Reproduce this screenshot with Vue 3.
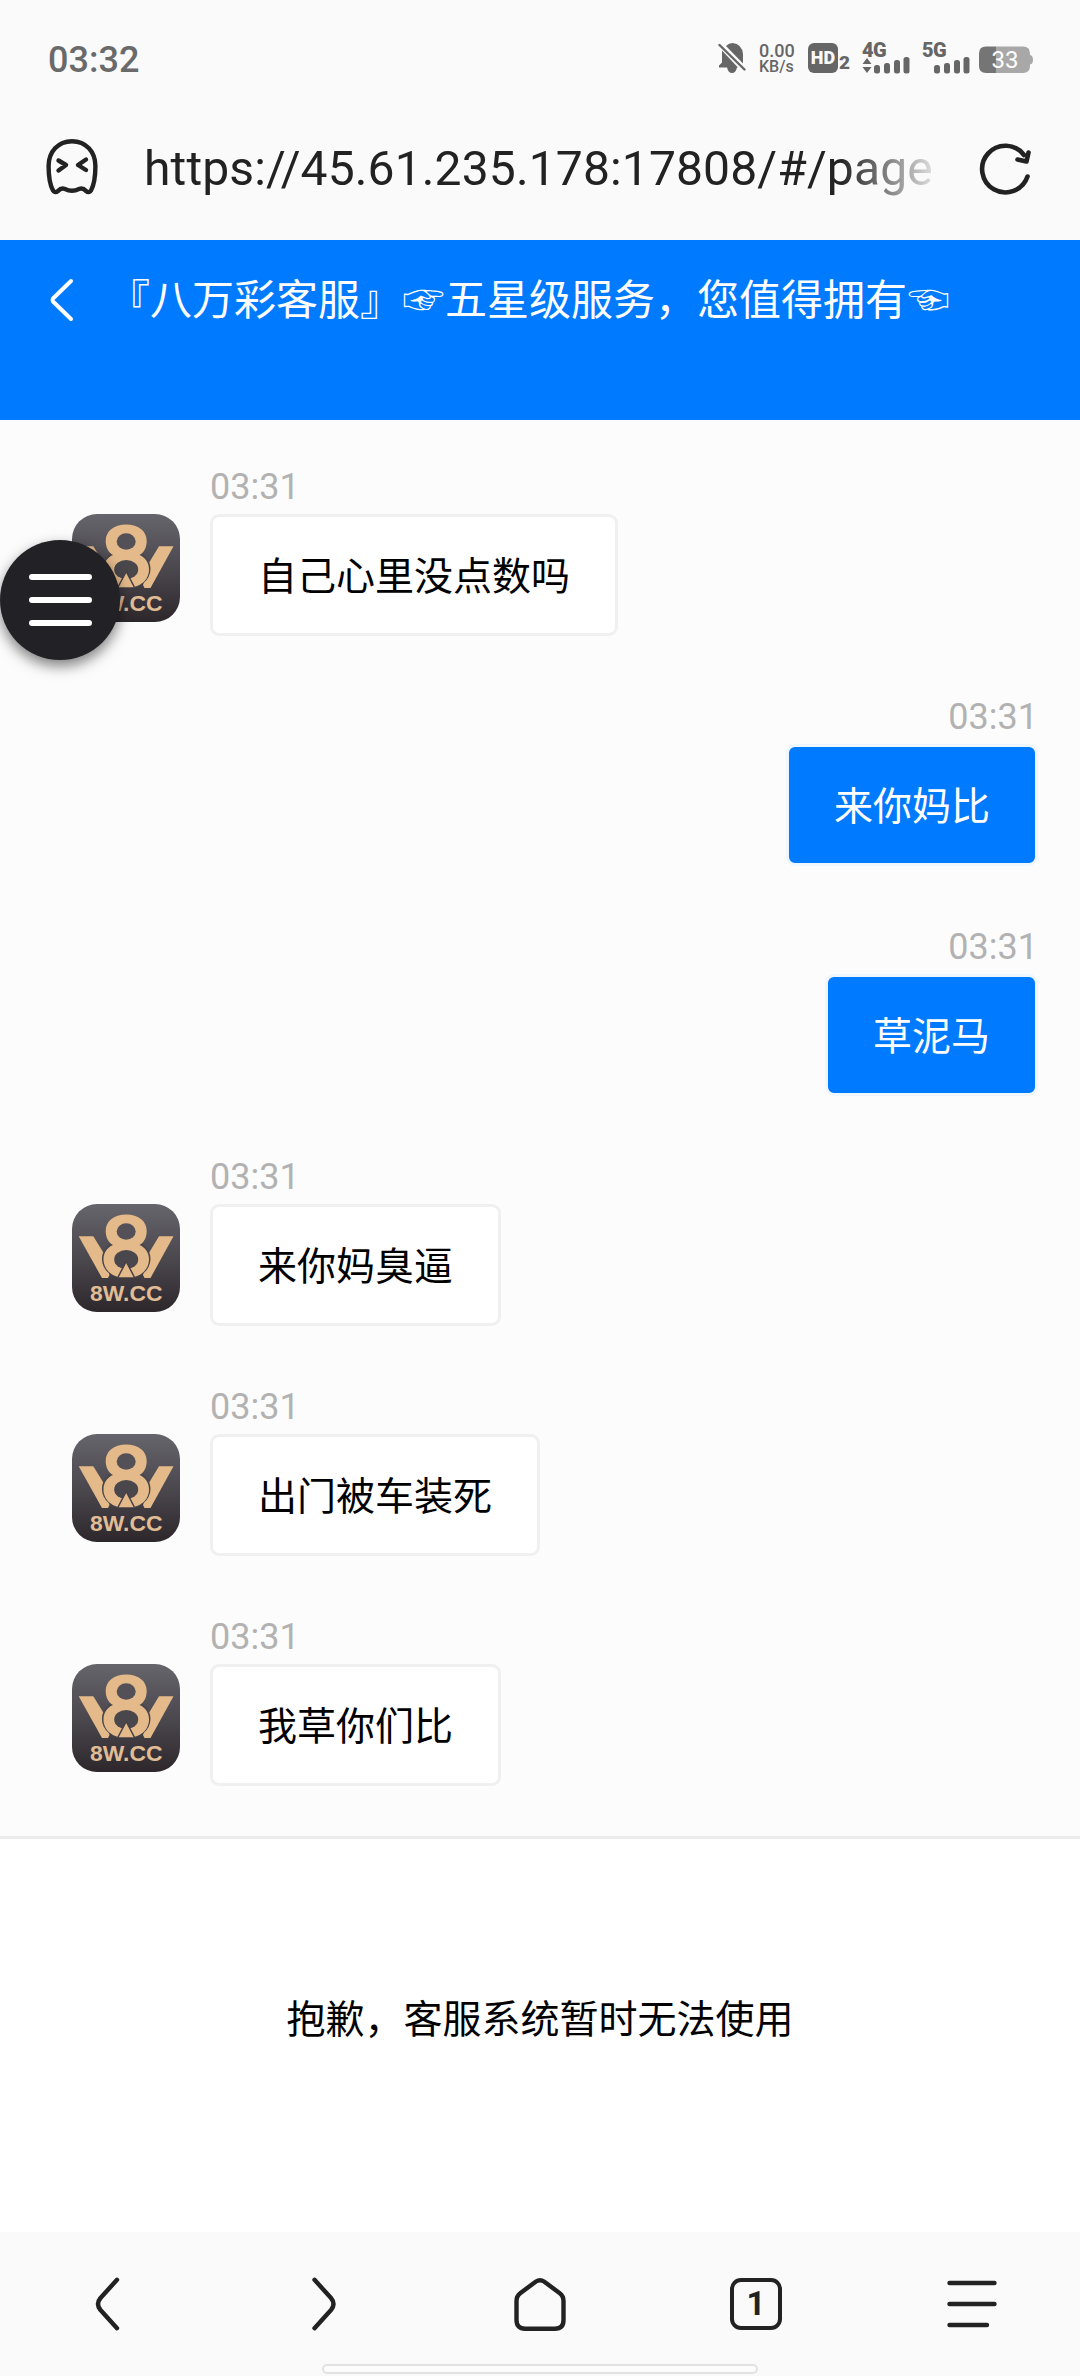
<script setup>
const messages = [
  { from: 'agent', time: '03:31', text: '自己心里没点数吗' },
  { from: 'me', time: '03:31', text: '来你妈比' },
  { from: 'me', time: '03:31', text: '草泥马' },
  { from: 'agent', time: '03:31', text: '来你妈臭逼' },
  { from: 'agent', time: '03:31', text: '出门被车装死' },
  { from: 'agent', time: '03:31', text: '我草你们比' },
]
</script>

<template>
  <div class="screen">
    <div class="status">
      <span class="clock">03:32</span>
      <div class="indicators">
        <svg class="bell" width="28" height="32" viewBox="0 0 28 32">
          <path d="M4 8.500 L20 25.500 H1 V23.500 L4 20.500Z M8 4 Q11 1 14.500 1 Q24 2 25 12 V21.500 Z" fill="#666" />
          <path d="M9 25 H19 Q18 31 14 31 Q10 31 9 25Z" fill="#666" />
          <path d="M1.500 3 L26.500 27.500" stroke="#666" stroke-width="2.400" stroke-linecap="round" />
        </svg>
        <div class="speed"><span class="rate">0.00</span><span class="unit">KB/s</span></div>
        <div class="hd"><span class="hd-box">HD</span><span class="hd-num">2</span></div>
        <div class="signal">
          <span class="net">4G</span>
          <svg width="48" height="18" viewBox="0 0 48 18" fill="#666">
            <path d="M0.500 8 L5 2 L9.500 8Z M0.500 11 L5 17 L9.500 11Z" />
            <rect x="12" y="9" width="6" height="8.500" rx="2.500" />
            <rect x="22" y="7" width="6" height="10.500" rx="2.500" />
            <rect x="32" y="4" width="6" height="13.500" rx="2.500" />
            <rect x="41.500" y="1" width="6" height="16.500" rx="2.500" />
          </svg>
        </div>
        <div class="signal second">
          <span class="net">5G</span>
          <svg width="48" height="18" viewBox="0 0 48 18" fill="#666">
            <rect x="12" y="9" width="6" height="8.500" rx="2.500" />
            <rect x="22" y="7" width="6" height="10.500" rx="2.500" />
            <rect x="32" y="4" width="6" height="13.500" rx="2.500" />
            <rect x="41.500" y="1" width="6" height="16.500" rx="2.500" />
          </svg>
        </div>
        <svg class="battery" width="54" height="28" viewBox="0 0 54 28">
          <path d="M17 .5 H44 Q51 .5 51 7.500 V9 Q54 9.500 54 14 Q54 18 51 18.500 V20 Q51 27 44 27 H17Z" fill="#a8a8a8" />
          <path d="M17 .5 H7 Q0 .5 0 7.500 V20 Q0 27 7 27 H17Z" fill="#757575" />
          <text x="26" y="22" text-anchor="middle" class="level">33</text>
        </svg>
      </div>
    </div>

    <div class="address">
      <svg class="ghost" width="52" height="56" viewBox="0 0 52 56" fill="none" stroke="#222" stroke-width="4.400" stroke-linecap="round" stroke-linejoin="round">
        <path d="M26 2.200 C12 2.200 2.600 13 2.600 27 C2.600 38 4 46 7 51.500 Q9 54.500 12 52 Q15 48.500 19 50 Q26 53.500 33 50 Q37 48.500 40 52 Q43 54.500 45 51.500 C48 46 49.400 38 49.400 27 C49.400 13 40 2.200 26 2.200Z" />
        <path d="M12.500 21.500 L20 26 L12.500 31.500 M40 20.500 L32 26 L40 31" />
      </svg>
      <span class="url">https://45.61.235.178:17808/#/page</span>
      <svg class="reload" width="54" height="54" viewBox="0 0 54 54" fill="none" stroke="#222" stroke-width="4.600" stroke-linecap="round" stroke-linejoin="round">
        <path d="M48.500 35.500 A23.300 23.300 0 1 1 45 14" />
        <path d="M49.500 11.500 L47.500 20.500 L38.500 18.500" />
      </svg>
    </div>

    <header class="titlebar">
      <svg width="26" height="44" viewBox="0 0 26 44" fill="none" stroke="#fff" stroke-width="4" stroke-linecap="round" stroke-linejoin="round">
        <path d="M22 3 L4 20.500 Q3 22 4 23.500 L22 41" />
      </svg>
      <h1>『八万彩客服』<span class="hand">☞</span>五星级服务，您值得拥有<span class="hand">☜</span></h1>
    </header>

    <main class="chat">
      <div v-for="(m, i) in messages" :key="i" class="row" :class="m.from">
        <svg v-if="m.from === 'agent'" class="avatar" width="108" height="108" viewBox="0 0 108 108">
          <defs>
            <linearGradient :id="'bg' + i" x1="0" y1="0" x2="0" y2="1">
              <stop offset="0" stop-color="#66656b" />
              <stop offset=".55" stop-color="#48454b" />
              <stop offset="1" stop-color="#2d272b" />
            </linearGradient>
          </defs>
          <rect width="108" height="108" rx="25" :fill="'url(#bg' + i + ')'" />
          <g fill="#e4ba8a">
            <path d="M6.700 32.300 H21.300 L31 48 L37.500 71 L36 74 H30Z" />
            <path d="M101.500 32.300 H87 L77.500 48 L71 71 L72.500 74 H78.500Z" />
          </g>
          <ellipse cx="54.200" cy="54.800" rx="24.300" ry="20.500" fill="#49464c" />
          <path d="M54.200 10.500 C67 10.500 74.700 17.500 74.700 27 C74.700 33.500 72 38.500 67.500 41 C73.500 43.500 77 49 77 55.500 C77 66 68 74 54.200 74 C40.500 74 31.500 66 31.500 55.500 C31.500 49 35 43.500 41 41 C36.500 38.500 33.700 33.500 33.700 27 C33.700 17.500 41.500 10.500 54.200 10.500Z" fill="#e4ba8a" />
          <ellipse cx="54.200" cy="27.500" rx="9.500" ry="8.300" fill="#535157" />
          <ellipse cx="54.200" cy="55.500" rx="12" ry="9.500" fill="#49464c" />
          <path d="M54.200 57.500 L62.800 74 H45.600Z" fill="#e4ba8a" stroke="#454147" stroke-width="1.500" />
          <rect x="42" y="74" width="25" height="2" fill="#3e3a3f" />
          <text x="18" y="97.300" textLength="72.500" lengthAdjust="spacingAndGlyphs" class="logo">8W.CC</text>
        </svg>
        <div class="body">
          <time>{{ m.time }}</time>
          <p class="bubble">{{ m.text }}</p>
        </div>
      </div>
      <button class="fab" aria-label="menu"><i></i><i></i><i></i></button>
    </main>

    <section class="notice">抱歉，客服系统暂时无法使用</section>

    <nav class="nav">
      <div class="cell">
        <svg width="56" height="56" viewBox="0 0 56 56"><path d="M37 3.800 L20.500 22 Q15.500 28 20.500 34 L37 52.200" /></svg>
      </div>
      <div class="cell">
        <svg width="56" height="56" viewBox="0 0 56 56"><path d="M18.500 3.800 L35 22 Q40 28 35 34 L18.500 52.200" /></svg>
      </div>
      <div class="cell">
        <svg width="56" height="56" viewBox="0 0 56 56"><path d="M24 5.500 Q28 3 32 5.500 L47.500 17 Q51.500 20 51.500 25 V44 Q51.500 52.700 43 52.700 H13 Q4.500 52.700 4.500 44 V25 Q4.500 20 8.500 17Z" /></svg>
      </div>
      <div class="cell"><span class="tabs">1</span></div>
      <div class="cell">
        <svg width="56" height="56" viewBox="0 0 56 56"><path d="M5.500 7 H50.500 M5.500 28 H50.500 M5.500 49 H43" /></svg>
      </div>
      <div class="pill"></div>
    </nav>
  </div>
</template>

<style>
body { margin: 0; background: #fafafa; }
</style>

<style scoped>
.screen {
  width: 1080px;
  height: 2376px;
  display: flex;
  flex-direction: column;
  overflow: hidden;
  background: #fafafa;
  font-family: Roboto, "Noto Sans CJK SC", sans-serif;
}
.status {
  box-sizing: border-box;
  height: 110px;
  padding: 0 47px 0 48px;
  display: flex;
  justify-content: space-between;
}
.clock {
  margin-top: 39px;
  font-size: 36px;
  line-height: 42px;
  font-weight: 500;
  color: #6a6a6a;
}
.indicators { display: flex; margin-top: 42px; color: #666; }
.bell { margin-right: 13px; }
.speed {
  width: 36px;
  margin-right: 13px;
  padding-top: 1px;
  box-sizing: border-box;
  display: flex;
  flex-direction: column;
  font-weight: 500;
}
.rate { font-size: 18px; line-height: 16px; }
.unit { font-size: 16px; line-height: 16px; }
.hd { display: flex; align-items: flex-end; height: 31px; width: 54px; }
.hd-box {
  width: 30px;
  height: 30px;
  line-height: 30px;
  border-radius: 6px;
  background: #666;
  color: #fafafa;
  font-weight: 900;
  font-size: 18px;
  text-align: center;
}
.hd-num { font-weight: 900; font-size: 19px; line-height: 20px; height: 20px; margin-left: 1px; }
.signal { display: flex; flex-direction: column; width: 48px; margin-right: 12px; }
.second { margin-right: 9px; }
.net { height: 14px; line-height: 16px; font-weight: 900; font-size: 20px; letter-spacing: -.5px; }
.battery { margin-top: 4px; }
.level { font: 400 24px Roboto, sans-serif; fill: #fff; }

.address {
  box-sizing: border-box;
  height: 130px;
  padding: 0 47px 0 46px;
  display: flex;
}
.ghost { margin-top: 29px; }
.url {
  width: 791px;
  margin-left: 46px;
  margin-top: 31px;
  font-size: 48px;
  line-height: 56px;
  letter-spacing: .13px;
  color: #222;
  white-space: nowrap;
  overflow: hidden;
  -webkit-mask-image: linear-gradient(90deg, #000 88%, transparent 101.5%);
  mask-image: linear-gradient(90deg, #000 88%, transparent 101.5%);
}
.reload { margin-top: 31px; margin-left: auto; }

.titlebar {
  box-sizing: border-box;
  height: 180px;
  padding: 31px 49px;
  display: flex;
  align-items: flex-start;
  background: #007aff;
  color: #fff;
}
.titlebar svg { margin-top: 7px; }
h1 {
  margin: 0 0 0 33px;
  font-size: 42px;
  line-height: 60px;
  font-weight: 400;
  white-space: nowrap;
}
.hand { display: inline-block; width: 43px; text-align: center; font-family: "Noto Sans CJK SC", "DejaVu Sans", sans-serif; line-height: 1; }

.chat {
  position: relative;
  box-sizing: border-box;
  height: 1419px;
  padding-top: 44px;
  background: #fcfcfc;
  border-bottom: 3px solid #ebebeb;
}
.row { display: flex; height: 230px; padding: 0 42px 0 72px; }
.avatar { margin-top: 50px; }
.body { display: flex; flex-direction: column; margin-left: 30px; align-items: flex-start; }
.me .body { margin-left: auto; align-items: flex-end; }
time {
  height: 50px;
  line-height: 46px;
  font-size: 36px;
  color: #b2b2b2;
}
.bubble {
  box-sizing: border-box;
  margin: 0;
  height: 122px;
  padding: 2px 45px 0;
  border: 3px solid #f0f0f0;
  border-radius: 9px;
  background: #fff;
  font-size: 39px;
  line-height: 116px;
  color: #000;
}
.me .bubble { background: #007aff; border-color: #eef7fe; color: #fff; }
.logo { font: bold 22px "Liberation Sans", sans-serif; fill: #e0bd96; }
.fab {
  position: absolute;
  left: 0;
  top: 120px;
  width: 120px;
  height: 120px;
  border: 0;
  padding: 0;
  border-radius: 50%;
  background: #222126;
  box-shadow: 0 6px 14px rgba(0, 0, 0, .5);
  display: flex;
  flex-direction: column;
  justify-content: center;
  align-items: center;
  gap: 17px;
}
.fab i { width: 63px; height: 6px; border-radius: 3px; background: #fff; }

.notice {
  height: 393px;
  box-sizing: border-box;
  padding-top: 152px;
  background: #fff;
  text-align: center;
  font-size: 39px;
  line-height: 58px;
  color: #000;
}
.nav {
  position: relative;
  height: 144px;
  display: flex;
  align-items: center;
  background: #fafafa;
}
.cell { flex: 1; display: flex; justify-content: center; }
.cell svg { fill: none; stroke: #222; stroke-width: 4.400; stroke-linecap: round; stroke-linejoin: round; }
.tabs {
  box-sizing: border-box;
  width: 52px;
  height: 52px;
  border: 4px solid #222;
  border-radius: 11px;
  font-size: 33px;
  line-height: 43px;
  font-weight: 700;
  text-align: center;
  color: #222;
}
.pill {
  position: absolute;
  left: 322px;
  top: 132px;
  box-sizing: border-box;
  width: 436px;
  height: 10px;
  border: 2px solid #e2e2e2;
  border-radius: 5px;
  background: #fcfcfc;
}
</style>
